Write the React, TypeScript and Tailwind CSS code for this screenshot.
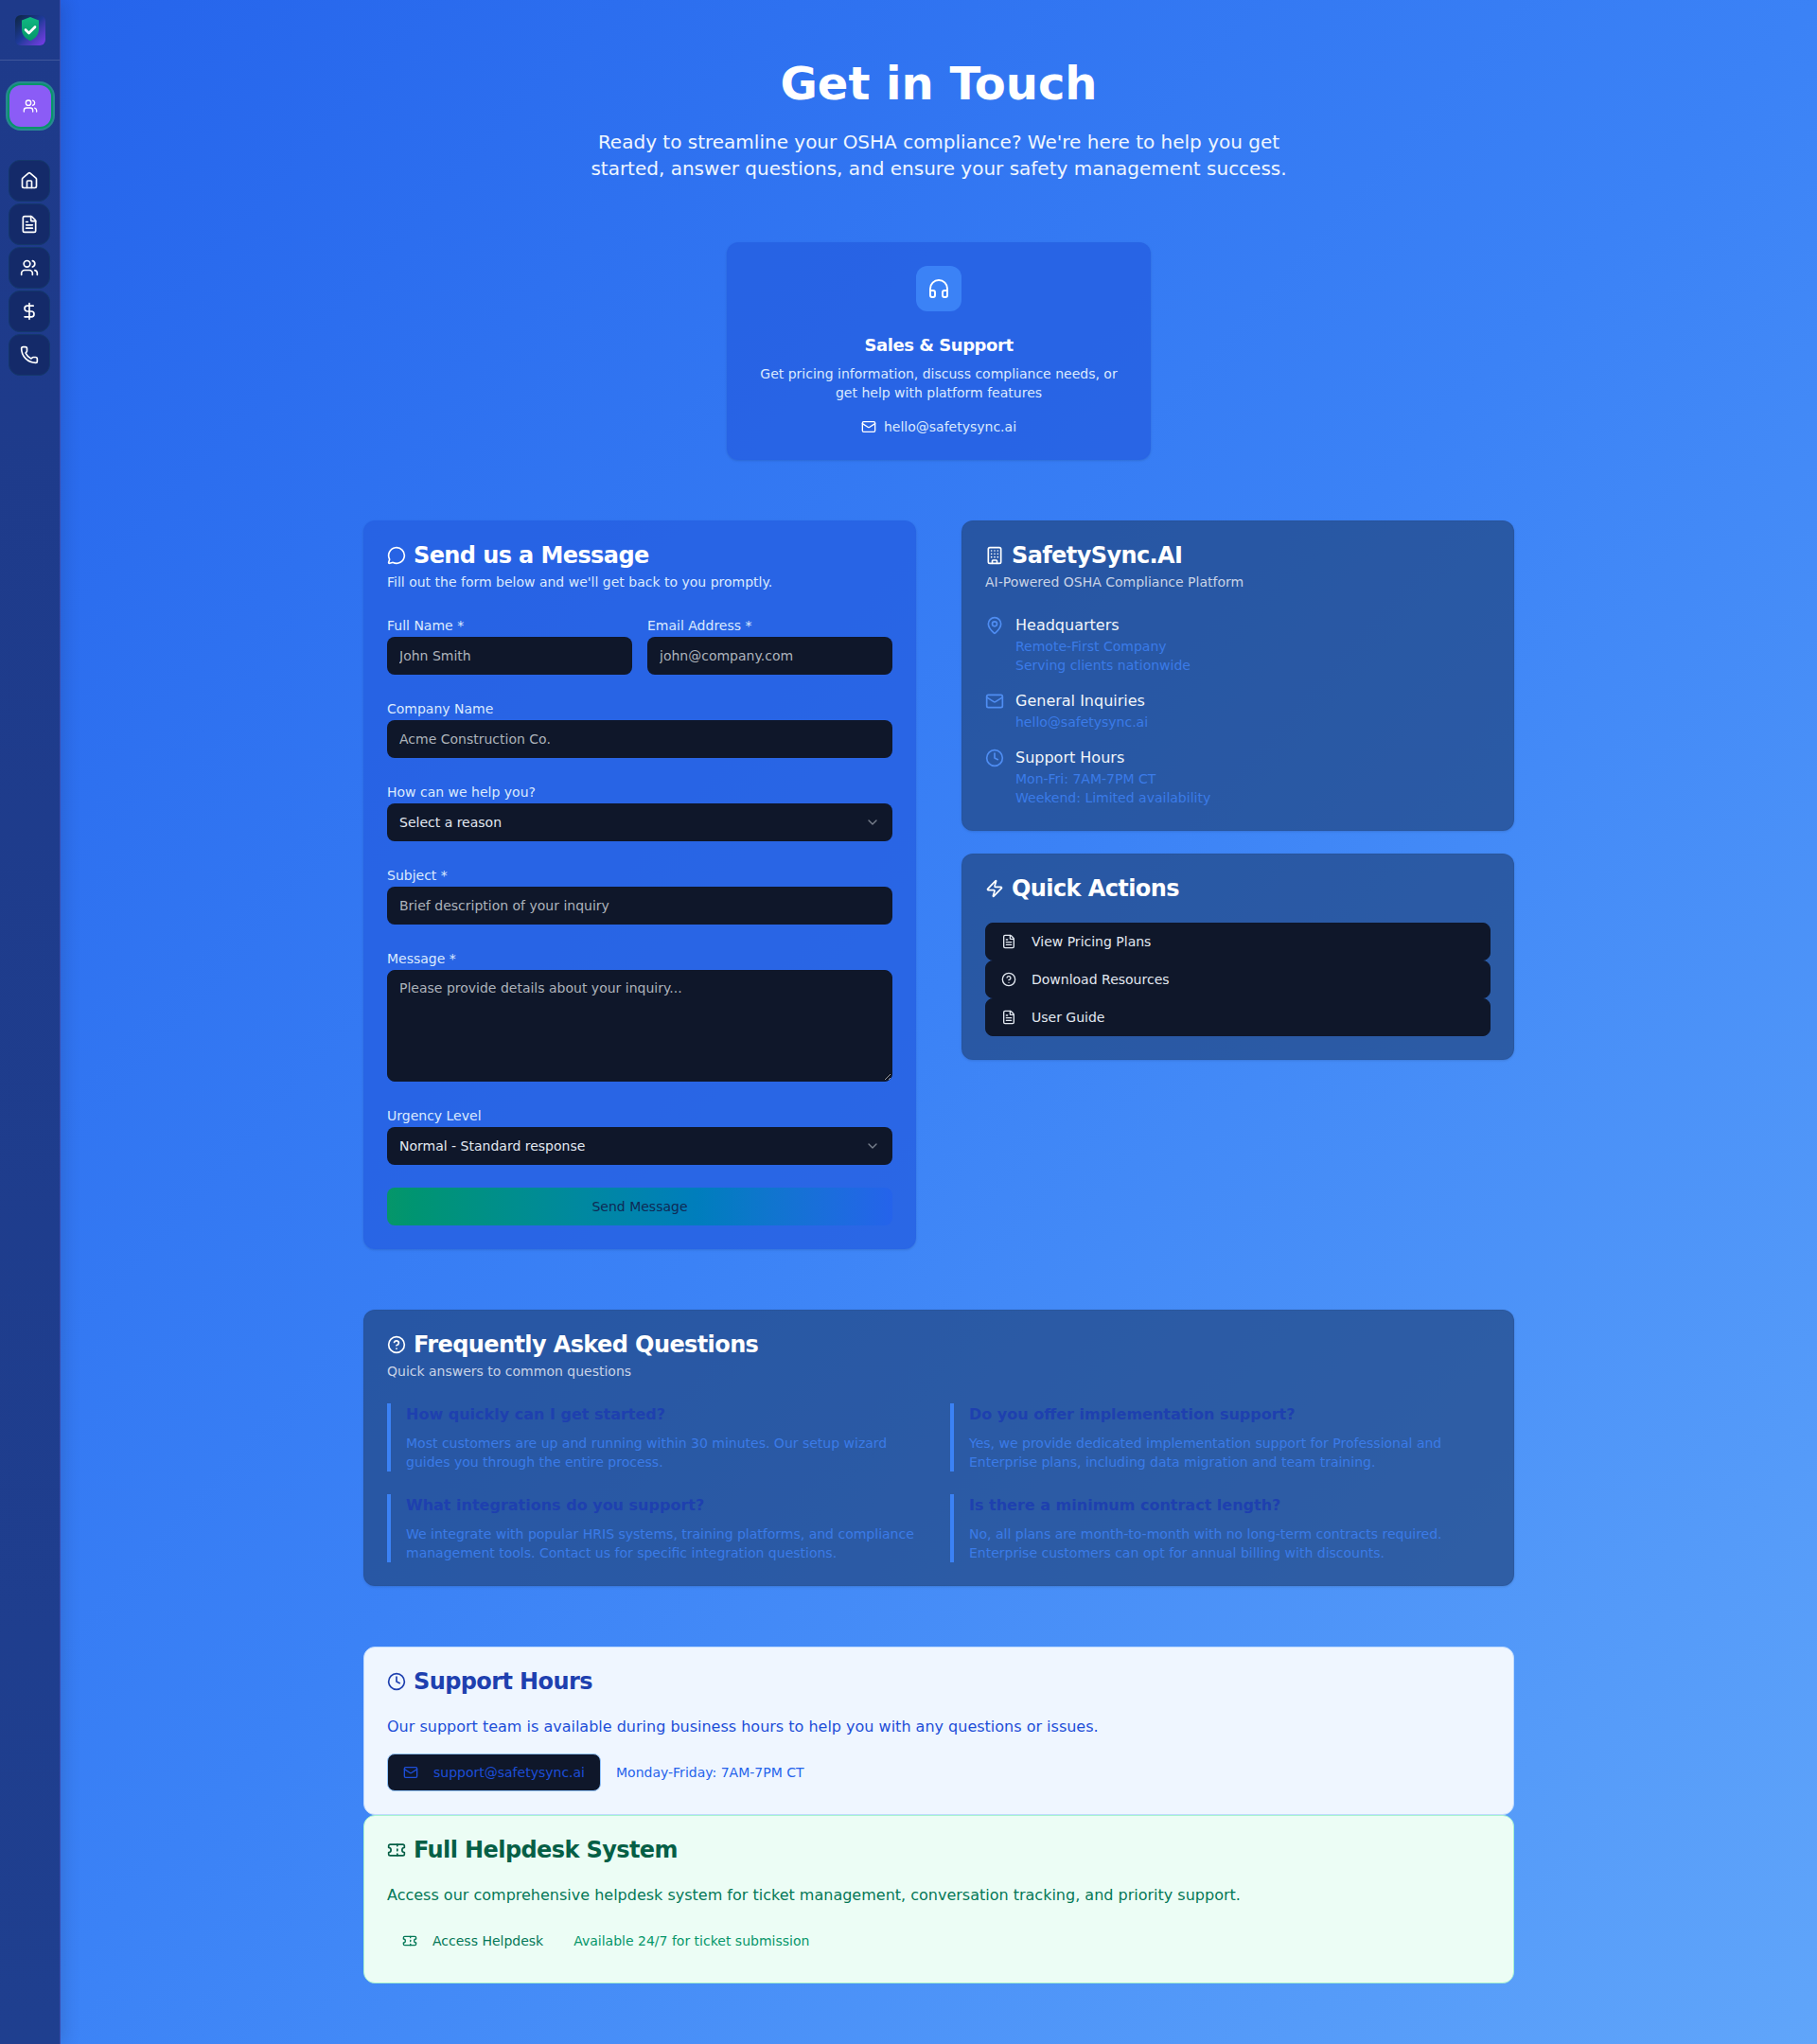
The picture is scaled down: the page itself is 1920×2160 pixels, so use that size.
import {
  Building,
  ChevronDown,
  CircleHelp,
  Clock,
  DollarSign,
  FileText,
  Headphones,
  House,
  Mail,
  MapPin,
  MessageCircle,
  Phone,
  Ticket,
  Users,
  Zap,
} from 'lucide-react';
import type { ReactNode } from 'react';

const navItems = [House, FileText, Users, DollarSign, Phone];

const faqs = [
  {
    q: 'How quickly can I get started?',
    a: 'Most customers are up and running within 30 minutes. Our setup wizard guides you through the entire process.',
  },
  {
    q: 'Do you offer implementation support?',
    a: 'Yes, we provide dedicated implementation support for Professional and Enterprise plans, including data migration and team training.',
  },
  {
    q: 'What integrations do you support?',
    a: 'We integrate with popular HRIS systems, training platforms, and compliance management tools. Contact us for specific integration questions.',
  },
  {
    q: 'Is there a minimum contract length?',
    a: 'No, all plans are month-to-month with no long-term contracts required. Enterprise customers can opt for annual billing with discounts.',
  },
];

const quickActions = [
  { icon: FileText, label: 'View Pricing Plans' },
  { icon: CircleHelp, label: 'Download Resources' },
  { icon: FileText, label: 'User Guide' },
];

const fieldClass =
  'block h-10 w-full rounded-lg bg-[#0f172a] px-[13px] text-sm text-white outline-none placeholder:text-[#adb3bb]';

function Label({ children }: { children: ReactNode }) {
  return <label className="block text-sm leading-6 text-[#dbeafe]">{children}</label>;
}

function Field({ label, placeholder }: { label: string; placeholder: string }) {
  return (
    <div>
      <Label>{label}</Label>
      <input className={fieldClass} placeholder={placeholder} />
    </div>
  );
}

function SelectField({ label, value }: { label: string; value: string }) {
  return (
    <div>
      <Label>{label}</Label>
      <button type="button" className="flex h-10 w-full items-center justify-between rounded-lg bg-[#0f172a] px-[13px] text-sm text-[#e2e8f0]">
        <span>{value}</span>
        <ChevronDown className="h-4 w-4 opacity-50" />
      </button>
    </div>
  );
}

function CardTitle({ icon: Icon, children, className }: { icon: typeof Mail; children: ReactNode; className: string }) {
  return (
    <h2 className={`flex h-8 items-center gap-2 text-2xl font-bold tracking-tight ${className}`}>
      <Icon className="h-5 w-5" />
      {children}
    </h2>
  );
}

function InfoRow({ icon: Icon, title, lines }: { icon: typeof Mail; title: string; lines: string[] }) {
  return (
    <div className="flex gap-3">
      <Icon className="mt-0.5 h-5 w-5 text-[#4f8df2]" />
      <div>
        <p className="text-base text-[#f1f5f9]">{title}</p>
        {lines.map((line) => (
          <p key={line} className="text-sm text-[#3b7be8]">{line}</p>
        ))}
      </div>
    </div>
  );
}

function Logo() {
  return (
    <div className="h-8 w-8 rounded-md bg-gradient-to-br from-[#0f2540] via-[#1e3a9a] to-[#7c3aed]">
      <svg viewBox="0 0 32 32" className="h-8 w-8">
        <defs>
          <linearGradient id="shield" x1="0" y1="0" x2="0" y2="1">
            <stop offset="0" stopColor="#10b981" />
            <stop offset="1" stopColor="#059669" />
          </linearGradient>
        </defs>
        <path d="M16 2l9 3.500v9c0 6.500-4 10.500-9 12.500-5-2-9-6-9-12.500v-9z" fill="url(#shield)" />
        <path d="M11 15.500l3.500 3.500 6.500-6.500" fill="none" stroke="#ffffff" strokeWidth="2.600" strokeLinecap="round" strokeLinejoin="round" />
      </svg>
    </div>
  );
}

export default function App() {
  return (
    <div className="flex min-h-screen bg-gradient-to-br from-[#2563eb] via-[#3b82f6] to-[#60a5fa] font-['DejaVu_Sans',sans-serif]">
      <aside className="w-16 shrink-0 border-r border-[#3b4db0] bg-gradient-to-b from-[#1e3a8a] to-[#1f3f8f] shadow-[4px_0_16px_rgba(15,23,42,0.15)]">
        <div className="flex h-16 items-center justify-center border-b border-[#ffffff26]">
          <Logo />
        </div>
        <div className="flex justify-center pt-[26px]">
          <button type="button" className="flex h-11 w-11 items-center justify-center rounded-xl bg-[#8b5cf6] text-white shadow-[0_0_0_2px_#059669,0_0_0_4px_#34d39980]">
            <Users className="h-4 w-4" />
          </button>
        </div>
        <nav className="mt-[35px] flex flex-col gap-0.5 pl-[9px]">
          {navItems.map((Icon, i) => (
            <button key={i} type="button" className="flex h-11 w-11 items-center justify-center rounded-xl border border-[#14386c] bg-[#142a69] text-white">
              <Icon className="h-5 w-5" />
            </button>
          ))}
        </nav>
      </aside>

      <main className="flex-1">
        <div className="mx-auto max-w-7xl px-8 py-16">
          <div className="mb-16 text-center">
            <h1 className="mb-6 text-5xl font-bold text-white">Get in Touch</h1>
            <p className="mx-auto max-w-3xl text-xl text-[#eff6ff]">
              Ready to streamline your OSHA compliance? We're here to help you get started, answer questions, and ensure your safety management success.
            </p>
          </div>

          <div className="mx-auto mb-16 max-w-md rounded-xl border border-[#265fe11a] bg-[#265fe1cc] p-6 text-center shadow-sm">
            <div className="mx-auto mb-[22px] flex h-12 w-12 items-center justify-center rounded-xl bg-[#3b82f6] text-white">
              <Headphones className="h-6 w-6" />
            </div>
            <h3 className="mb-1.5 text-lg font-semibold tracking-tight text-white">Sales &amp; Support</h3>
            <p className="mb-4 text-sm text-[#dbeafe]">Get pricing information, discuss compliance needs, or get help with platform features</p>
            <p className="flex items-center justify-center gap-2 text-sm text-[#dbeafe]">
              <Mail className="h-4 w-4 text-white" />
              hello@safetysync.ai
            </p>
          </div>

          <div className="mb-16 grid grid-cols-2 items-start gap-12">
            <section className="rounded-xl border border-[#265fe11a] bg-[#265fe1cc] px-6 pt-5 pb-6 shadow-sm">
              <CardTitle icon={MessageCircle} className="text-white">Send us a Message</CardTitle>
              <p className="mt-0.5 mb-6 text-sm text-[#dbeafe]">Fill out the form below and we'll get back to you promptly.</p>
              <form className="space-y-6">
                <div className="grid grid-cols-2 gap-4">
                  <Field label="Full Name *" placeholder="John Smith" />
                  <Field label="Email Address *" placeholder="john@company.com" />
                </div>
                <Field label="Company Name" placeholder="Acme Construction Co." />
                <SelectField label="How can we help you?" value="Select a reason" />
                <Field label="Subject *" placeholder="Brief description of your inquiry" />
                <div>
                  <Label>Message *</Label>
                  <textarea
                    rows={5}
                    placeholder="Please provide details about your inquiry..."
                    className="block w-full rounded-lg border border-[#0f172a] bg-[#0f172a] px-3 py-2 text-sm text-white outline-none placeholder:text-[#adb3bb]"
                  />
                </div>
                <SelectField label="Urgency Level" value="Normal - Standard response" />
                <button type="button" className="h-10 w-full rounded-lg bg-gradient-to-r from-[#059669] to-[#2563eb] text-sm text-[#0f2a55]">
                  Send Message
                </button>
              </form>
            </section>

            <div className="space-y-6">
              <section className="rounded-xl border border-[#21468233] bg-[#214682b3] px-6 pt-5 pb-6 shadow-sm">
                <CardTitle icon={Building} className="text-white">SafetySync.AI</CardTitle>
                <p className="mt-0.5 mb-6 text-sm text-[#c9d3e6]">AI-Powered OSHA Compliance Platform</p>
                <div className="space-y-4">
                  <InfoRow icon={MapPin} title="Headquarters" lines={['Remote-First Company', 'Serving clients nationwide']} />
                  <InfoRow icon={Mail} title="General Inquiries" lines={['hello@safetysync.ai']} />
                  <InfoRow icon={Clock} title="Support Hours" lines={['Mon-Fri: 7AM-7PM CT', 'Weekend: Limited availability']} />
                </div>
              </section>

              <section className="rounded-xl border border-[#21468233] bg-[#214682b3] px-6 pt-5 pb-6 shadow-sm">
                <CardTitle icon={Zap} className="text-white">Quick Actions</CardTitle>
                <div className="mt-5">
                  {quickActions.map(({ icon: Icon, label }) => (
                    <button key={label} type="button" className="flex h-10 w-full items-center gap-4 rounded-lg border border-[#0f172a] bg-[#0f172a] px-4 text-sm text-[#e2e8f0]">
                      <Icon className="h-4 w-4" />
                      {label}
                    </button>
                  ))}
                </div>
              </section>
            </div>
          </div>

          <section className="mb-16 rounded-xl border border-[#21468233] bg-[#214682b3] px-6 pt-5 pb-6 shadow-sm">
            <CardTitle icon={CircleHelp} className="text-white">Frequently Asked Questions</CardTitle>
            <p className="mt-0.5 mb-6 text-sm text-[#c9d3e6]">Quick answers to common questions</p>
            <div className="grid grid-cols-2 gap-6">
              {faqs.map(({ q, a }) => (
                <div key={q} className="border-l-4 border-[#3b82f6] pl-4">
                  <h4 className="mb-2 text-base font-semibold text-[#1e40af]">{q}</h4>
                  <p className="text-sm text-[#3b7be8]">{a}</p>
                </div>
              ))}
            </div>
          </section>

          <section className="rounded-xl border border-[#bfdbfe] bg-[#eff6ff] px-6 pt-5 pb-6">
            <CardTitle icon={Clock} className="text-[#1e40af]">Support Hours</CardTitle>
            <p className="mt-5 mb-4 text-base text-[#1d4ed8]">Our support team is available during business hours to help you with any questions or issues.</p>
            <div className="flex items-center gap-4">
              <button type="button" className="flex h-10 items-center gap-4 rounded-lg border border-[#93c5fd] bg-[#0f172a] px-4 text-sm text-[#1d4ed8]">
                <Mail className="h-4 w-4" />
                support@safetysync.ai
              </button>
              <span className="text-sm text-[#2563eb]">Monday-Friday: 7AM-7PM CT</span>
            </div>
          </section>

          <section className="rounded-xl border border-[#a7f3d0] bg-[#ecfdf5] px-6 pt-5 pb-6">
            <CardTitle icon={Ticket} className="text-[#065f46]">Full Helpdesk System</CardTitle>
            <p className="mt-5 mb-4 text-base text-[#047857]">Access our comprehensive helpdesk system for ticket management, conversation tracking, and priority support.</p>
            <div className="flex items-center gap-4">
              <button type="button" className="flex h-10 items-center gap-4 rounded-lg px-4 text-sm text-[#047857]">
                <Ticket className="h-4 w-4" />
                Access Helpdesk
              </button>
              <span className="text-sm text-[#059669]">Available 24/7 for ticket submission</span>
            </div>
          </section>
        </div>
      </main>
    </div>
  );
}
